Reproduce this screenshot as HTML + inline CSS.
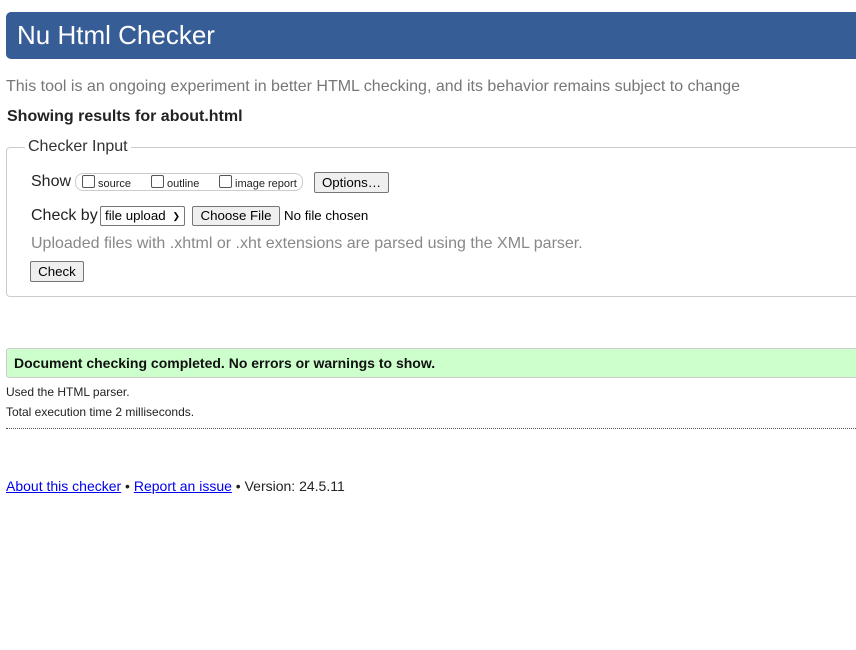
<!DOCTYPE html>
<html><head><style>
body{margin:0;width:856px;height:650px;background:#fff;font-family:"Liberation Sans",Arial,sans-serif;position:relative;overflow:hidden;color:#222}
.a{position:absolute;white-space:nowrap}
.btn{position:absolute;background:#efefef;border:1px solid #767676;border-radius:2px;font-size:13.3px;color:#000;box-sizing:border-box;text-align:center}
.cb{display:inline-block;width:11px;height:11px;border:1px solid #555;border-radius:2px;vertical-align:-1px;margin-right:3px;background:#fff}
</style></head><body>
<div class="a" style="left:6px;top:12px;width:860px;height:47px;background:#365d96;border-radius:5px 0 0 5px"></div>
<div class="a" style="left:17px;top:19px;font-size:26px;color:#fff;line-height:32px">Nu Html Checker</div>
<div class="a" style="left:6px;top:77px;font-size:16px;color:#777;line-height:19px">This tool is an ongoing experiment in better HTML checking, and its behavior remains subject to change</div>
<div class="a" style="left:7px;top:107px;font-size:16px;font-weight:bold;color:#222;line-height:19px">Showing results for about.html</div>
<div class="a" style="left:6px;top:147px;width:860px;height:150px;border:1px solid #ccc;border-radius:4px;box-sizing:border-box"></div>
<div class="a" style="left:25px;top:137px;padding:0 3px;background:#fff;font-size:16px;color:#333;line-height:19px">Checker Input</div>
<div class="a" style="left:31px;top:172px;font-size:16px;color:#222;line-height:19px">Show</div>
<div class="a" style="left:75px;top:173px;width:228px;height:18px;border:1px solid #ccc;border-radius:8px;box-sizing:border-box"></div>
<div class="a" style="left:82px;top:175px;font-size:11px;color:#222;line-height:14px"><span class="cb"></span>source</div>
<div class="a" style="left:151px;top:175px;font-size:11px;color:#222;line-height:14px"><span class="cb"></span>outline</div>
<div class="a" style="left:219px;top:175px;font-size:11px;color:#222;line-height:14px"><span class="cb"></span>image report</div>
<div class="btn" style="left:314px;top:172px;width:75px;height:21px;line-height:19px">Options…</div>
<div class="a" style="left:31px;top:206px;font-size:16px;color:#222;line-height:19px">Check by</div>
<div class="a" style="left:100px;top:206px;width:85px;height:20px;border:1px solid #767676;border-radius:2px;box-sizing:border-box;font-size:13.3px;color:#000;line-height:18px;padding-left:4px;background:#fff">file upload <span style="font-size:9px;position:absolute;right:4px">&#10095;</span></div>
<div class="btn" style="left:192px;top:206px;width:88px;height:20px;line-height:18px">Choose File</div>
<div class="a" style="left:284px;top:208px;font-size:13.3px;color:#000;line-height:16px">No file chosen</div>
<div class="a" style="left:31px;top:234px;font-size:16px;color:#888;line-height:19px">Uploaded files with .xhtml or .xht extensions are parsed using the XML parser.</div>
<div class="btn" style="left:30px;top:261px;width:54px;height:21px;line-height:19px">Check</div>
<div class="a" style="left:6px;top:348px;width:860px;height:30px;background:#ccffcc;border:1px solid #ccc;border-radius:3px 0 0 3px;box-sizing:border-box"></div>
<div class="a" style="left:14px;top:355px;font-size:14px;font-weight:bold;color:#111;line-height:16px">Document checking completed. No errors or warnings to show.</div>
<div class="a" style="left:6px;top:385px;font-size:12px;color:#222;line-height:14px">Used the HTML parser.</div>
<div class="a" style="left:6px;top:405px;font-size:12px;color:#222;line-height:14px">Total execution time 2 milliseconds.</div>
<div class="a" style="left:6px;top:428px;width:850px;border-top:1px dotted #555"></div>
<div class="a" style="left:6px;top:478px;font-size:14px;color:#222;line-height:16px"><a href="#" style="color:#00e">About this checker</a> • <a href="#" style="color:#00e">Report an issue</a> • Version: 24.5.11</div>
</body></html>
